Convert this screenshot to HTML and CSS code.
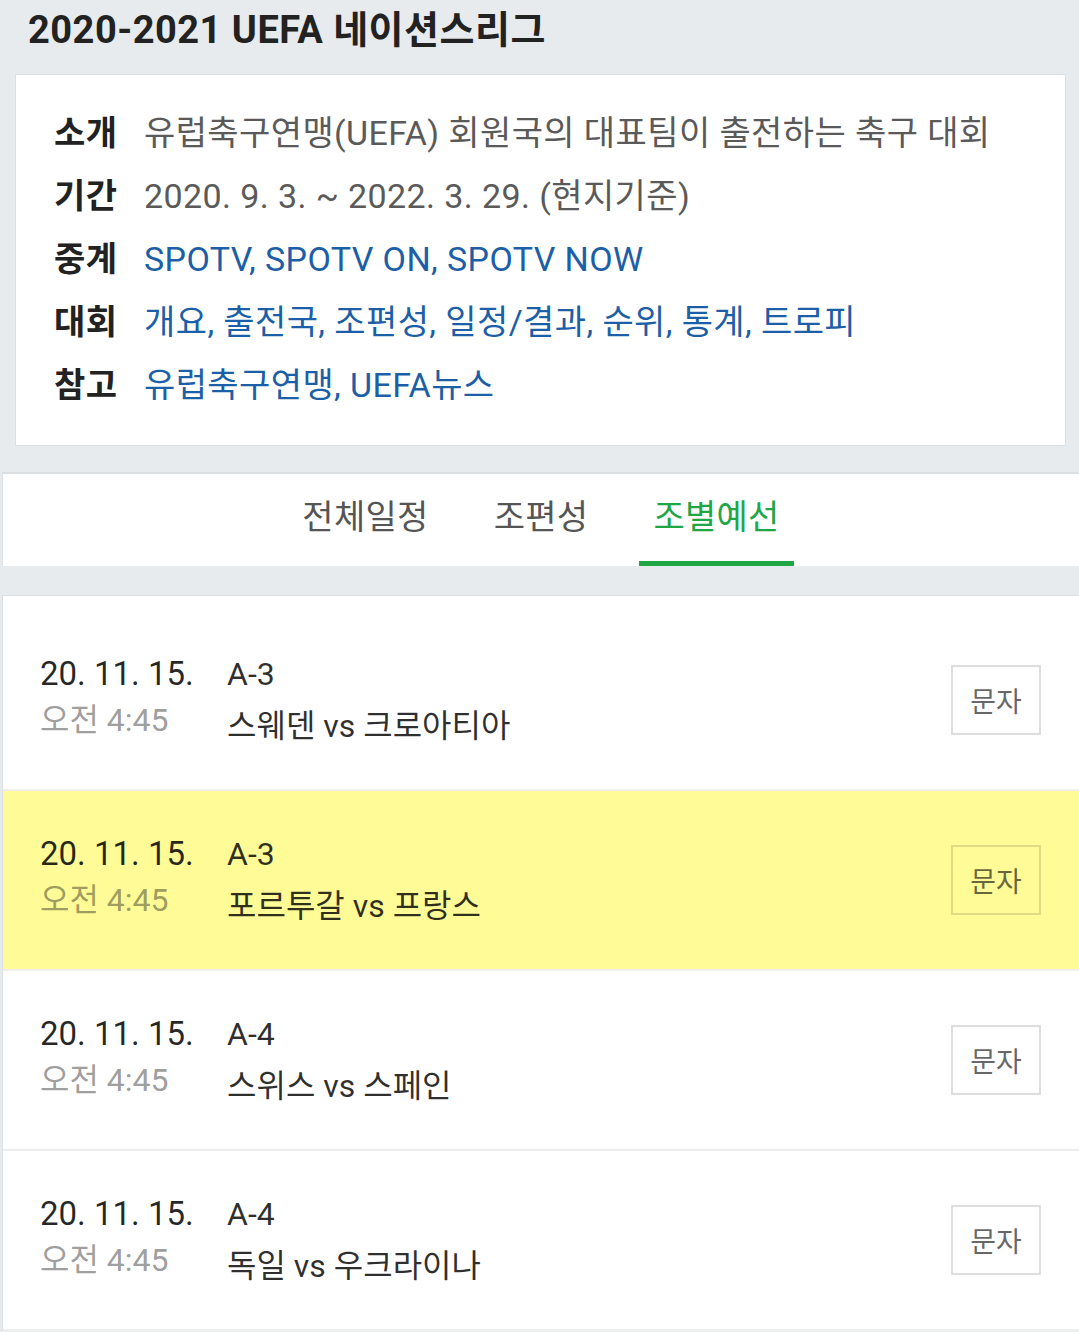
FILE: index.html
```html
<!DOCTYPE html>
<html lang="ko">
<head>
<meta charset="utf-8">
<title>2020-2021 UEFA 네이션스리그</title>
<link rel="stylesheet" href="styles.css">
</head>
<body>
<h1 class="page-title">2020-2021 UEFA 네이션스리그</h1>

<div class="info-card">
	<div class="info-row">
		<span class="info-label">소개</span>
		<span class="info-text">유럽축구연맹(UEFA) 회원국의 대표팀이 출전하는 축구 대회</span>
	</div>
	<div class="info-row">
		<span class="info-label">기간</span>
		<span class="info-text">2020. 9. 3. ~ 2022. 3. 29. (현지기준)</span>
	</div>
	<div class="info-row">
		<span class="info-label">중계</span>
		<span class="info-links"><a href="#">SPOTV</a>, <a href="#">SPOTV ON</a>, <a href="#">SPOTV NOW</a></span>
	</div>
	<div class="info-row">
		<span class="info-label">대회</span>
		<span class="info-links"><a href="#">개요</a>, <a href="#">출전국</a>, <a href="#">조편성</a>, <a href="#">일정/결과</a>, <a href="#">순위</a>, <a href="#">통계</a>, <a href="#">트로피</a></span>
	</div>
	<div class="info-row">
		<span class="info-label">참고</span>
		<span class="info-links"><a href="#">유럽축구연맹</a>, <a href="#">UEFA뉴스</a></span>
	</div>
</div>

<div class="tab-bar">
	<a class="tab" href="#">전체일정</a>
	<a class="tab" href="#">조편성</a>
	<a class="tab tab-active" href="#">조별예선</a>
</div>

<ul class="match-list">
	<li class="match">
		<div class="match-when">
			<div class="match-date">20. 11. 15.</div>
			<div class="match-time">오전 4:45</div>
		</div>
		<div class="match-info">
			<div class="match-group">A-3</div>
			<div class="match-teams">스웨덴 vs 크로아티아</div>
		</div>
		<a class="sms-btn" href="#">문자</a>
	</li>
	<li class="match match-hl">
		<div class="match-when">
			<div class="match-date">20. 11. 15.</div>
			<div class="match-time">오전 4:45</div>
		</div>
		<div class="match-info">
			<div class="match-group">A-3</div>
			<div class="match-teams">포르투갈 vs 프랑스</div>
		</div>
		<a class="sms-btn" href="#">문자</a>
	</li>
	<li class="match">
		<div class="match-when">
			<div class="match-date">20. 11. 15.</div>
			<div class="match-time">오전 4:45</div>
		</div>
		<div class="match-info">
			<div class="match-group">A-4</div>
			<div class="match-teams">스위스 vs 스페인</div>
		</div>
		<a class="sms-btn" href="#">문자</a>
	</li>
	<li class="match">
		<div class="match-when">
			<div class="match-date">20. 11. 15.</div>
			<div class="match-time">오전 4:45</div>
		</div>
		<div class="match-info">
			<div class="match-group">A-4</div>
			<div class="match-teams">독일 vs 우크라이나</div>
		</div>
		<a class="sms-btn" href="#">문자</a>
	</li>
</ul>
</body>
</html>
```

FILE: styles.css
```css
body {
	margin: 0;
	font-family: Roboto, "Noto Sans CJK KR", sans-serif;
	background-color: #e8ebed;
	color: #222;
}
a {
	text-decoration: none;
}
.page-title {
	margin: 0;
	padding: 8px 28px 0;
	font-size: 38px;
	line-height: 44px;
	letter-spacing: 0.5px;
	font-weight: bold;
	color: #222;
}

/* info box */
.info-card {
	margin: 22px 13px 0 15px;
	padding: 27px 38px 28px;
	background-color: #fff;
	border: 1px solid #dcdfe2;
}
.info-row {
	display: grid;
	grid-template-columns: 90px 1fr;
	font-size: 34px;
	line-height: 63px;
	letter-spacing: 0.4px;
	white-space: nowrap;
}
.info-label {
	font-weight: bold;
	color: #222;
}
.info-text {
	color: #5a5a5a;
}
.info-links,
.info-links a {
	color: #1c5fa8;
}

/* tabs */
.tab-bar {
	display: flex;
	justify-content: center;
	gap: 37px;
	margin: 26px 0 0 2px;
	background-color: #fff;
	border-top: 2px solid #dcdfe2;
	border-left: 1px solid #dcdfe2;
	height: 92px;
}
.tab {
	padding: 0 14px;
	font-size: 34px;
	line-height: 87px;
	letter-spacing: 0.3px;
	color: #555;
	border-bottom: 5px solid transparent;
}
.tab-active {
	color: #21a646;
	border-bottom-color: #21a646;
}

/* match list */
.match-list {
	list-style: none;
	margin: 29px 0 0 2px;
	padding: 15px 0 0;
	background-color: #fff;
	border-top: 1px solid #dcdfe2;
	border-left: 1px solid #dcdfe2;
}
.match {
	display: flex;
	align-items: center;
	height: 178px;
	padding: 0 38px 0 37px;
	border-bottom: 2px solid #eeeeee;
}
.match-hl {
	background-color: #fffc98;
}
.match-when {
	width: 187px;
	margin-bottom: 6px;
}
.match-date {
	font-size: 33px;
	line-height: 46px;
	color: rgba(0, 0, 0, 0.85);
}
.match-time {
	font-size: 32px;
	line-height: 46px;
	color: rgba(0, 0, 0, 0.4);
}
.match-info {
	flex: 1;
	margin-top: 6px;
}
.match-group {
	font-size: 32px;
	line-height: 46px;
	color: rgba(0, 0, 0, 0.82);
}
.match-teams {
	font-size: 32px;
	line-height: 58px;
	color: rgba(0, 0, 0, 0.82);
}
.sms-btn {
	display: flex;
	align-items: center;
	justify-content: center;
	box-sizing: border-box;
	width: 90px;
	height: 70px;
	border: 2px solid rgba(0, 0, 0, 0.13);
	font-size: 28px;
	color: rgba(0, 0, 0, 0.6);
}
```
